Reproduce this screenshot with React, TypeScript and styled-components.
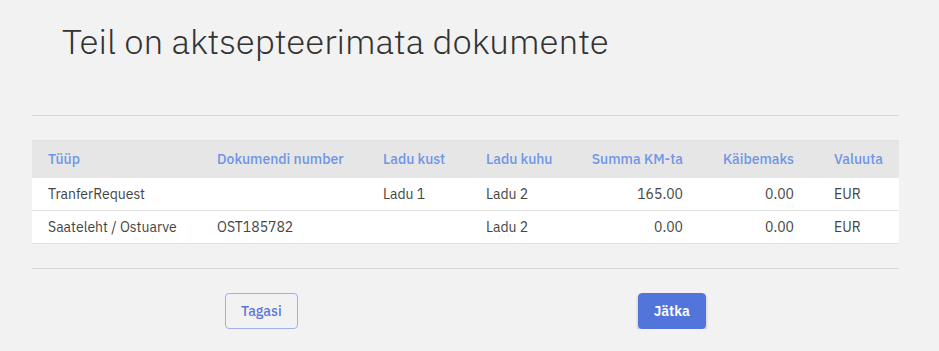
import React from "react";
import styled, { createGlobalStyle } from "styled-components";

const Global = createGlobalStyle`
  html, body { margin: 0; padding: 0; background: #f2f2f2; }
  body { font-family: "IBM Plex Sans", "Noto Sans", "Liberation Sans", sans-serif; color: #444; }
  * { box-sizing: border-box; }
`;

const Page = styled.div`
  padding: 0 40px 0 32px;
  width: 939px;
`;

const Title = styled.h1`
  margin: 0;
  padding: 17px 0 0 30px;
  height: 115px;
  font-size: 35px;
  font-weight: 300;
  color: #333;
  line-height: 48px;
  letter-spacing: -0.05px;
`;

const Rule = styled.hr<{ $gap?: number }>`
  border: none;
  border-top: 1px solid #d6d6d6;
  margin: ${(p) => p.$gap ?? 0}px 0 0;
`;

const Table = styled.table`
  margin-top: 24px;
  width: 867px;
  border-collapse: collapse;
  table-layout: fixed;
  font-size: 14px;
`;

const HeadCell = styled.th<{ $right?: boolean; $pl?: number }>`
  background: #e6e6e6;
  border-top: 1px solid #e0e0e0;
  height: 37px;
  padding: 0 16px 0 ${(p) => p.$pl ?? 16}px;
  text-align: ${(p) => (p.$right ? "right" : "left")};
  font-weight: 500;
  color: #6f95e6;
  white-space: nowrap;
`;

const Row = styled.tr`
  background: #fff;
  border-bottom: 1px solid #e2e2e2;
`;

const Cell = styled.td<{ $right?: boolean; $pl?: number }>`
  height: 33px;
  padding: 0 16px 0 ${(p) => p.$pl ?? 16}px;
  text-align: ${(p) => (p.$right ? "right" : "left")};
  color: #444;
  white-space: nowrap;
`;

const Actions = styled.div`
  display: flex;
  justify-content: center;
  gap: 340px;
  padding-top: 24px;
`;

const Button = styled.button<{ $primary?: boolean }>`
  height: 36px;
  padding: 0 15px;
  border-radius: 4px;
  font-family: inherit;
  font-size: 14px;
  font-weight: ${(p) => (p.$primary ? 600 : 500)};
  cursor: pointer;
  border: 1px solid ${(p) => (p.$primary ? "#5275db" : "#9cb1ec")};
  background: ${(p) => (p.$primary ? "#5275db" : "transparent")};
  color: ${(p) => (p.$primary ? "#fff" : "#5a77d8")};
  box-shadow: ${(p) => (p.$primary ? "0 2px 3px rgba(0,0,0,0.25)" : "none")};
  min-width: ${(p) => (p.$primary ? 66 : 72)}px;
`;

const cols = [169, 166, 103, 100, 129, 111, 89];

const rows = [
  ["TranferRequest", "", "Ladu 1", "Ladu 2", "165.00", "0.00", "EUR"],
  ["Saateleht / Ostuarve", "OST185782", "", "Ladu 2", "0.00", "0.00", "EUR"],
];

const headers = [
  "Tüüp",
  "Dokumendi number",
  "Ladu kust",
  "Ladu kuhu",
  "Summa KM-ta",
  "Käibemaks",
  "Valuuta",
];

const right = (i: number) => i === 4 || i === 5;
const pl = (i: number) => (i === 6 ? 24 : 16);

export default function App() {
  return (
    <>
      <Global />
      <Page>
        <Title>Teil on aktsepteerimata dokumente</Title>
        <Rule />
        <Table>
          <colgroup>
            {cols.map((w, i) => (
              <col key={i} style={{ width: w }} />
            ))}
          </colgroup>
          <thead>
            <tr>
              {headers.map((h, i) => (
                <HeadCell key={h} $right={right(i)} $pl={pl(i)}>
                  {h}
                </HeadCell>
              ))}
            </tr>
          </thead>
          <tbody>
            {rows.map((r, ri) => (
              <Row key={ri}>
                {r.map((c, i) => (
                  <Cell key={i} $right={right(i)} $pl={pl(i)}>
                    {c}
                  </Cell>
                ))}
              </Row>
            ))}
          </tbody>
        </Table>
        <Rule $gap={24} />
        <Actions>
          <Button>Tagasi</Button>
          <Button $primary>Jätka</Button>
        </Actions>
      </Page>
    </>
  );
}
